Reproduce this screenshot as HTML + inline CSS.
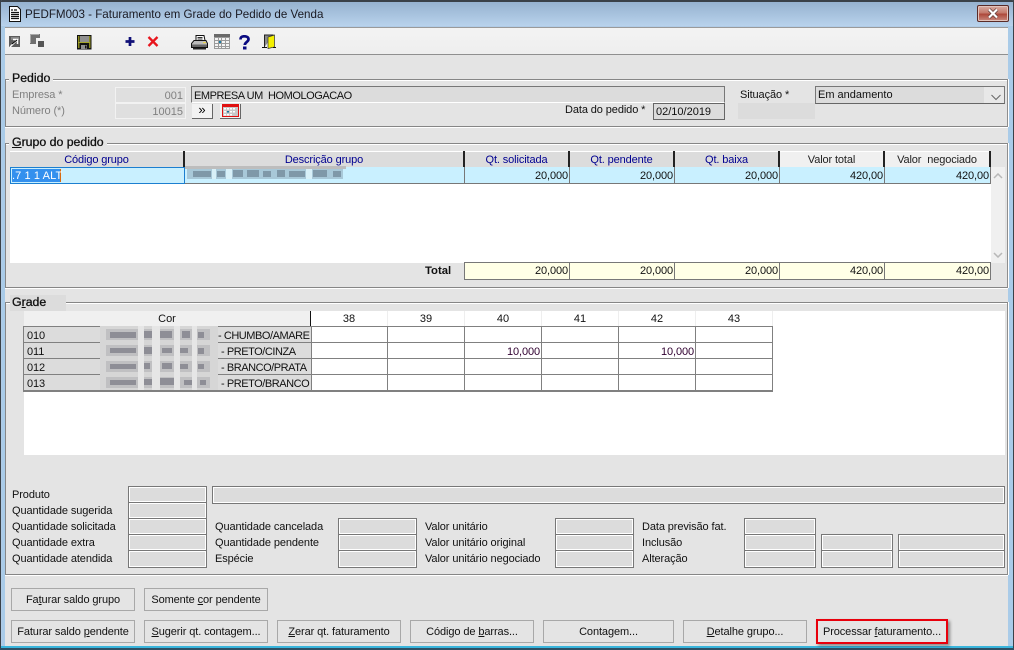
<!DOCTYPE html>
<html><head><meta charset="utf-8">
<style>
html,body{margin:0;padding:0;background:#e4e4e4}
#w{position:relative;width:1014px;height:650px;overflow:hidden;background:#e4e4e4;font:11px/16px "Liberation Sans",sans-serif;color:#111}
#w div,#w svg{position:absolute}
.t{white-space:nowrap;height:16px;margin-top:1px;letter-spacing:-.1px}
.d{color:#808080}
.cp{letter-spacing:-.45px}
.g{border:1px solid #868686;border-right-color:#8e8e8e;box-shadow:0 1px 0 #fff,inset 0 1px 0 #fff,1px 0 0 #fff;box-sizing:border-box}
.gt{-webkit-text-stroke:.3px #111;background:#e4e4e4;padding:0 3px;height:15px;line-height:15px;font-size:12.3px;white-space:nowrap}
.f{box-sizing:border-box;background:#dcdcdc;border:1px solid #777;box-shadow:inset 0 0 0 1px #fff}
.e{box-sizing:border-box;background:#dfdfdf;border:1px solid #f2f2f2;text-align:right;color:#808080;padding-right:2px;line-height:16px}
.b{box-sizing:border-box;height:23px;background:#e4e4e4;border:1px solid #a8a8a8;text-align:center;line-height:22px;white-space:nowrap;letter-spacing:-.1px}
.h{box-sizing:border-box;top:151px;height:16px;background:#dcdcdc;color:#000090;text-align:center;line-height:18px;border-right:2px solid #222;box-shadow:inset 0 1px 0 #fff;white-space:nowrap;letter-spacing:-.12px}
.h2{background:#f0f0f0;color:#222}
.c{box-sizing:border-box;top:167px;height:17px;background:#c9f0ff;text-align:right;padding-right:1px;line-height:18px;border-right:1px solid #777;border-bottom:1px solid #777;letter-spacing:-.1px}
.tt{box-sizing:border-box;top:262px;height:18px;background:#ffffe6;text-align:right;padding-right:1px;line-height:17px;border-top:1px solid #777;border-right:1px solid #777;border-bottom:1px solid #777;letter-spacing:-.1px}
.v{background:#808080;width:1px}
.n{background:#808080;height:1px}
.hc{top:311px;height:15px;text-align:center;line-height:17px;width:77px;border-right:1px solid #eee;box-sizing:border-box}
u{text-decoration:underline}
</style></head><body><div id="w">

<!-- frame -->
<div style="left:0;top:0;width:1014px;height:650px;background:#b0cbe6;border-radius:6px 6px 0 0"></div>
<div style="left:0;top:0;width:1014px;height:2px;background:#3a4148;border-radius:6px 6px 0 0"></div>
<div style="left:0;top:0;width:1px;height:650px;background:#3a4148"></div>
<div style="left:1013px;top:0;width:1px;height:650px;background:#3a4148"></div>
<div style="left:0;top:648px;width:1014px;height:2px;background:#2f4f63"></div>
<div style="left:1px;top:2px;width:1012px;height:24px;background:linear-gradient(#96b2cf,#b8d2ec)"></div>
<div style="left:2px;top:26px;width:3px;height:622px;background:#a9cbe8"></div>
<div style="left:1008px;top:26px;width:5px;height:622px;background:#a9cbe8"></div>
<div style="left:1px;top:646px;width:1012px;height:2px;background:#39b5dc"></div>

<!-- title -->
<svg style="left:8px;top:6px" width="14" height="16" viewBox="0 0 14 16"><path d="M1.5.5h8l3 3v12h-11z" fill="#fff" stroke="#111"/><path d="M3 4h2M6 4h3M3 6.5h8M3 8.5h8M3 10.5h8M3 12.5h8" stroke="#111" stroke-width="1.2"/></svg>
<div class="t" style="left:25px;top:6px;font-size:11.6px;color:#1a1a22;letter-spacing:0">PEDFM003 - Faturamento em Grade do Pedido de Venda</div>
<div style="left:977px;top:5px;width:32px;height:17px;box-sizing:border-box;border:1px solid #5a2b27;border-radius:2px;background:linear-gradient(#d9aca2 0,#c47a6c 45%,#ae4a3c 55%,#c98a7e 100%);box-shadow:inset 0 0 0 1px #e2c3bb"></div>
<svg style="left:986px;top:8px" width="14" height="11" viewBox="0 0 14 11"><path d="M3 1.5l8 8M11 1.5l-8 8" stroke="#5e3c38" stroke-width="3.6"/><path d="M3 1.5l8 8M11 1.5l-8 8" stroke="#fff" stroke-width="2.2"/></svg>

<!-- toolbar -->
<div style="left:5px;top:27px;width:1003px;height:26px;background:linear-gradient(#f3f3f3,#eeeeee);border-top:1px solid #9a9a9a;border-bottom:1px solid #8f8f8f"></div>
<div style="left:5px;top:55px;width:1003px;height:591px;background:#e4e4e4"></div>

<svg style="left:9px;top:36px" width="12" height="12" viewBox="0 0 12 12"><rect width="11" height="11" fill="#5c5c5c"/><rect x="2" y="1" width="8" height="3" fill="#888"/><path d="M1 11L8 4M4 3.5h4.5V8" stroke="#fff" stroke-width="1.5" fill="none"/><path d="M3 8L8 4" stroke="#000"/></svg>
<svg style="left:30px;top:34px" width="15" height="14" viewBox="0 0 15 14"><path d="M0 0h10v4H6v6H0z" fill="#6f6f6f"/><path d="M1 0h8v1H1zM0 0h1v9H0z" fill="#a8a8a8"/><rect x="8" y="7" width="6" height="6" fill="#555"/></svg>
<svg style="left:77px;top:35px" width="15" height="15" viewBox="0 0 15 15"><rect width="14.5" height="14.5" fill="#111"/><rect x="1" y="1" width="1.5" height="12" fill="#8a8a1e"/><rect x="12" y="1" width="1.5" height="12" fill="#8a8a1e"/><rect x="3" y="1" width="9" height="6" fill="#8f8f8f"/><rect x="1" y="7" width="12" height="1" fill="#a5a52a"/><rect x="4" y="10" width="6" height="4" fill="#8f8f8f"/><rect x="8" y="10.500" width="1.500" height="3" fill="#111"/></svg>
<svg style="left:125px;top:37px" width="10" height="10" viewBox="0 0 10 10"><path d="M5 0v9M0.500 4.500h9" stroke="#101078" stroke-width="2.700"/></svg>
<svg style="left:147px;top:36px" width="12" height="11" viewBox="0 0 12 11"><path d="M1.500 1l9 9M10.500 1l-9 9" stroke="#e8141c" stroke-width="2.300"/></svg>
<svg style="left:191px;top:35px" width="17" height="15" viewBox="0 0 17 15"><path d="M5 .5h8l1 5H5z" fill="#fff" stroke="#111"/><path d="M6.500 2.500h5M6.500 4h5" stroke="#333"/><path d="M3 5.500h12l1.500 3v4h-16v-4z" fill="#bdbdbd" stroke="#111"/><rect x="1" y="9.500" width="15" height="2.500" fill="#666"/><rect x="12" y="7" width="3" height="1.200" fill="#e6d14a"/><path d="M2 13h13v1.500H2z" fill="#222"/></svg>
<svg style="left:214px;top:34px" width="16" height="15" viewBox="0 0 16 15"><rect width="16" height="15" fill="#9a9a9a"/><rect y="0" width="16" height="3" fill="#6a6a6a"/><g fill="#f4f4f4"><rect x="1" y="4" width="3" height="2"/><rect x="5" y="4" width="2" height="2"/><rect x="8" y="4" width="3" height="2"/><rect x="12" y="4" width="3" height="2"/><rect x="1" y="7" width="3" height="2"/><rect x="8" y="7" width="3" height="2"/><rect x="12" y="7" width="3" height="2"/><rect x="1" y="10" width="3" height="2"/><rect x="5" y="10" width="2" height="2"/><rect x="8" y="10" width="3" height="2"/><rect x="12" y="10" width="3" height="2"/><rect x="1" y="13" width="3" height="1"/><rect x="5" y="13" width="2" height="1"/><rect x="8" y="13" width="3" height="1"/><rect x="12" y="13" width="3" height="1"/></g><rect x="5" y="7" width="2" height="2" fill="#1a7fa8"/></svg>
<svg style="left:239px;top:35px" width="11" height="15" viewBox="0 0 11 15"><path d="M1.500 4.500C1.500 2 3 1.300 5.300 1.300 8 1.300 9.500 2.500 9.500 4.300c0 2.700-3.700 2.900-3.700 5.700" fill="none" stroke="#0a0a80" stroke-width="2.700"/><rect x="4" y="11.500" width="3.500" height="3" fill="#0a0a80"/></svg>
<svg style="left:261px;top:34px" width="16" height="15" viewBox="0 0 16 15"><path d="M3.500 13V1h9" fill="#8a8a8a" stroke="#222"/><path d="M7 3l6.500-2v12l-6.500 1.500z" fill="#f4f000" stroke="#333" stroke-width=".7"/><path d="M1 13.500h5M12 13.500h3" stroke="#111"/></svg>

<!-- Pedido group -->
<div class="g" style="left:5px;top:79px;width:1003px;height:48px"></div>
<div class="gt" style="left:9px;top:71px">Pedido</div>
<div class="t d" style="left:12px;top:86px">Empresa *</div>
<div class="t d" style="left:12px;top:102px">Número (*)</div>
<div class="e" style="left:115px;top:87px;width:71px;height:16px">001</div>
<div class="e" style="left:115px;top:103px;width:71px;height:16px">10015</div>
<div class="cp" style="left:191px;top:86px;width:534px;height:17px;box-sizing:border-box;background:#dcdcdc;border:1px solid #777;border-bottom-color:#fff;line-height:18px;padding-left:2px;white-space:pre">EMPRESA UM  HOMOLOGACAO</div>
<div style="left:192px;top:104px;width:21px;height:15px;box-sizing:border-box;background:#f2f2f2;border-right:1px solid #666;border-bottom:1px solid #666;text-align:center;line-height:11px;font-size:13px;color:#000">»</div>
<div style="left:220px;top:104px;width:21px;height:15px;box-sizing:border-box;background:#f2f2f2;border-right:1px solid #666;border-bottom:1px solid #666"></div>
<svg style="left:222px;top:104px" width="17" height="13" viewBox="0 0 17 13"><rect x=".5" y=".5" width="16" height="12" fill="#c8c8c8" stroke="#e01010"/><rect x="1" y="1" width="15" height="2" fill="#e01010"/><g fill="#fff"><rect x="2" y="4" width="2" height="1.500"/><rect x="5" y="4" width="2" height="1.500"/><rect x="8" y="4" width="2" height="1.500"/><rect x="11" y="4" width="2" height="1.500"/><rect x="2" y="7" width="2" height="1.500"/><rect x="8" y="7" width="2" height="1.500"/><rect x="11" y="7" width="2" height="1.500"/><rect x="2" y="10" width="2" height="1.500"/><rect x="5" y="10" width="2" height="1.500"/><rect x="8" y="10" width="2" height="1.500"/></g><rect x="5" y="7" width="2" height="1.500" fill="#11729c"/></svg>
<div class="t" style="left:565px;top:101px">Data do pedido *</div>
<div style="left:653px;top:103px;width:72px;height:17px;box-sizing:border-box;background:#dcdcdc;border:1px solid #666;line-height:16px;padding-left:2px">02/10/2019</div>
<div class="t" style="left:740px;top:86px">Situação *</div>
<div style="left:815px;top:86px;width:190px;height:18px;box-sizing:border-box;background:linear-gradient(90deg,#dcdcdc 168px,#e8e8e8 168px);border:1px solid #777;border-bottom-color:#666;line-height:17px;padding-left:2px">Em andamento</div>
<svg style="left:990px;top:94px" width="12" height="7" viewBox="0 0 12 7"><path d="M1.500 1l4.500 4.500L10.500 1" fill="none" stroke="#666"/></svg>
<div style="left:738px;top:103px;width:77px;height:16px;background:#dcdcdc"></div>

<!-- Grupo group -->
<div class="g" style="left:5px;top:143px;width:1003px;height:145px"></div>
<div class="gt" style="left:9px;top:135px"><u>G</u>rupo do pedido</div>
<div style="left:10px;top:167px;width:981px;height:96px;background:#fff"></div>
<div style="left:991px;top:167px;width:14px;height:96px;background:#f0f0f0"></div>
<svg style="left:993px;top:173px" width="10" height="6" viewBox="0 0 10 6"><path d="M1 5l4-4 4 4" stroke="#b8b8b8" stroke-width="1.500" fill="none"/></svg>
<svg style="left:993px;top:252px" width="10" height="6" viewBox="0 0 10 6"><path d="M1 1l4 4 4-4" stroke="#b8b8b8" stroke-width="1.500" fill="none"/></svg>

<div class="h" style="left:10px;width:175px">Código grupo</div>
<div class="h" style="left:185px;width:280px">Descrição grupo</div>
<div class="h" style="left:465px;width:105px">Qt. solicitada</div>
<div class="h" style="left:570px;width:105px">Qt. pendente</div>
<div class="h" style="left:675px;width:105px">Qt. baixa</div>
<div class="h h2" style="left:780px;width:105px">Valor total</div>
<div class="h h2" style="left:885px;width:106px;white-space:pre">Valor  negociado</div>

<div class="c" style="left:10px;width:175px;border:1px solid #1c7fd0;text-align:left;padding:0 0 0 1px;line-height:15px"></div>
<div style="left:12px;top:169px;width:48px;height:13px;background:#3390ee"></div>
<div style="left:60px;top:169px;width:1px;height:13px;background:#d86a10"></div>
<div class="t" style="left:12px;top:167px;color:#fff;letter-spacing:.1px">.7 1 1 ALT</div>
<div class="c" style="left:185px;width:280px"></div>
<div class="c" style="left:465px;width:105px">20,000</div>
<div class="c" style="left:570px;width:105px">20,000</div>
<div class="c" style="left:675px;width:105px">20,000</div>
<div class="c" style="left:780px;width:105px">420,00</div>
<div class="c" style="left:885px;width:106px">420,00</div>

<svg style="left:185px;top:166px" width="162" height="14" viewBox="0 0 162 14" shape-rendering="crispEdges"><rect x="0" y="0" width="161" height="3" fill="#bdbdbd"/><rect x="2" y="3" width="156" height="10" fill="#a8c8d8"/><g fill="#7f98a8"><rect x="8" y="5" width="18" height="6"/><rect x="32" y="5" width="8" height="6"/><rect x="48" y="4" width="10" height="7"/><rect x="62" y="4" width="12" height="7"/><rect x="78" y="5" width="8" height="6"/><rect x="92" y="4" width="8" height="7"/><rect x="104" y="5" width="16" height="6"/><rect x="128" y="4" width="14" height="7"/><rect x="148" y="5" width="8" height="6"/></g><g fill="#d8f0f8"><rect x="27" y="3" width="4" height="10"/><rect x="41" y="3" width="6" height="10"/><rect x="121" y="3" width="6" height="10"/></g></svg>

<div class="t" style="left:425px;top:262px;font-weight:bold;font-size:11.3px;letter-spacing:0">Total</div>
<div class="tt" style="left:464px;width:106px;border-left:1px solid #777">20,000</div>
<div class="tt" style="left:570px;width:105px">20,000</div>
<div class="tt" style="left:675px;width:105px">20,000</div>
<div class="tt" style="left:780px;width:105px">420,00</div>
<div class="tt" style="left:885px;width:106px">420,00</div>

<!-- Grade group -->
<div class="g" style="left:5px;top:302px;width:1003px;height:273px"></div>
<div style="left:10px;top:295px;width:56px;height:16px;background:#dcdcdc"></div>
<div class="gt" style="left:9px;top:295px;background:transparent"><span>G<u>r</u>ade</span></div>
<div style="left:24px;top:311px;width:981px;height:144px;background:#fff"></div>
<div style="left:24px;top:311px;width:287px;height:15px;background:#f0f0f0;text-align:center;line-height:17px;box-sizing:border-box;border-right:1px solid #111">Cor</div>
<div class="hc" style="left:311px">38</div>
<div class="hc" style="left:388px">39</div>
<div class="hc" style="left:465px">40</div>
<div class="hc" style="left:542px">41</div>
<div class="hc" style="left:619px">42</div>
<div class="hc" style="left:696px">43</div>

<div style="left:24px;top:327px;width:287px;height:64px;background:#dcdcdc"></div>
<div class="n" style="left:23px;top:326px;width:750px"></div>
<div class="n" style="left:23px;top:342px;width:750px"></div>
<div class="n" style="left:23px;top:358px;width:750px"></div>
<div class="n" style="left:23px;top:374px;width:750px"></div>
<div class="n" style="left:23px;top:390px;width:750px;height:2px"></div>
<div class="v" style="left:23px;top:326px;height:66px"></div>
<div class="v" style="left:311px;top:326px;height:66px"></div>
<div class="v" style="left:387px;top:326px;height:66px"></div>
<div class="v" style="left:464px;top:326px;height:66px"></div>
<div class="v" style="left:541px;top:326px;height:66px"></div>
<div class="v" style="left:618px;top:326px;height:66px"></div>
<div class="v" style="left:695px;top:326px;height:66px"></div>
<div class="v" style="left:772px;top:326px;height:66px"></div>

<svg style="left:100px;top:326px" width="118" height="64" viewBox="0 0 118 64" shape-rendering="crispEdges"><rect width="118" height="64" fill="#d6d6d6"/><g fill="#c0c0c2"><rect x="6" y="3" width="104" height="11"/><rect x="6" y="19" width="104" height="11"/><rect x="6" y="35" width="104" height="11"/><rect x="6" y="51" width="104" height="11"/></g><g fill="#e6e6e6"><rect x="38" y="0" width="6" height="64"/><rect x="52" y="0" width="8" height="64"/><rect x="74" y="0" width="6" height="64"/><rect x="92" y="0" width="5" height="64"/></g><g fill="#8e8e96"><rect x="10" y="6" width="26" height="6"/><rect x="44" y="5" width="8" height="7"/><rect x="60" y="5" width="12" height="7"/><rect x="82" y="5" width="8" height="7"/><rect x="98" y="6" width="6" height="6"/><rect x="10" y="22" width="26" height="5"/><rect x="44" y="21" width="8" height="7"/><rect x="62" y="22" width="10" height="5"/><rect x="80" y="22" width="8" height="5"/><rect x="98" y="22" width="6" height="6"/><rect x="10" y="38" width="26" height="5"/><rect x="44" y="37" width="6" height="6"/><rect x="62" y="37" width="10" height="6"/><rect x="80" y="38" width="8" height="5"/><rect x="98" y="38" width="6" height="5"/><rect x="10" y="54" width="26" height="5"/><rect x="44" y="53" width="8" height="6"/><rect x="60" y="52" width="14" height="7"/><rect x="84" y="54" width="8" height="5"/><rect x="100" y="54" width="6" height="5"/></g></svg>

<div class="t" style="left:27px;top:327px">010</div>
<div class="t" style="left:27px;top:343px">011</div>
<div class="t" style="left:27px;top:359px">012</div>
<div class="t" style="left:27px;top:375px">013</div>
<div class="t cp" style="left:218px;top:327px">- CHUMBO/AMARE</div>
<div class="t cp" style="left:221px;top:343px">- PRETO/CINZA</div>
<div class="t cp" style="left:221px;top:359px">- BRANCO/PRATA</div>
<div class="t cp" style="left:221px;top:375px">- PRETO/BRANCO</div>
<div class="t" style="left:507px;top:343px;color:#300030">10,000</div>
<div class="t" style="left:661px;top:343px;color:#300030">10,000</div>

<!-- details -->
<div class="t" style="left:12px;top:486px">Produto</div>
<div class="t" style="left:12px;top:502px">Quantidade sugerida</div>
<div class="t" style="left:12px;top:518px">Quantidade solicitada</div>
<div class="t" style="left:12px;top:534px">Quantidade extra</div>
<div class="t" style="left:12px;top:550px">Quantidade atendida</div>
<div class="f" style="left:128px;top:486px;width:79px;height:17px"></div>
<div class="f" style="left:128px;top:502px;width:79px;height:17px"></div>
<div class="f" style="left:128px;top:518px;width:79px;height:17px"></div>
<div class="f" style="left:128px;top:534px;width:79px;height:17px"></div>
<div class="f" style="left:128px;top:550px;width:79px;height:18px"></div>
<div class="f" style="left:212px;top:486px;width:793px;height:18px"></div>
<div class="t" style="left:215px;top:518px">Quantidade cancelada</div>
<div class="t" style="left:215px;top:534px">Quantidade pendente</div>
<div class="t" style="left:215px;top:550px">Espécie</div>
<div class="f" style="left:338px;top:518px;width:79px;height:17px"></div>
<div class="f" style="left:338px;top:534px;width:79px;height:17px"></div>
<div class="f" style="left:338px;top:550px;width:79px;height:18px"></div>
<div class="t" style="left:425px;top:518px">Valor unitário</div>
<div class="t" style="left:425px;top:534px">Valor unitário original</div>
<div class="t" style="left:425px;top:550px">Valor unitário negociado</div>
<div class="f" style="left:555px;top:518px;width:79px;height:17px"></div>
<div class="f" style="left:555px;top:534px;width:79px;height:17px"></div>
<div class="f" style="left:555px;top:550px;width:79px;height:18px"></div>
<div class="t" style="left:642px;top:518px">Data previsão fat.</div>
<div class="t" style="left:642px;top:534px">Inclusão</div>
<div class="t" style="left:642px;top:550px">Alteração</div>
<div class="f" style="left:744px;top:518px;width:72px;height:17px"></div>
<div class="f" style="left:744px;top:534px;width:72px;height:17px"></div>
<div class="f" style="left:744px;top:550px;width:72px;height:18px"></div>
<div class="f" style="left:821px;top:534px;width:72px;height:17px"></div>
<div class="f" style="left:821px;top:550px;width:72px;height:18px"></div>
<div class="f" style="left:898px;top:534px;width:107px;height:17px"></div>
<div class="f" style="left:898px;top:550px;width:107px;height:18px"></div>

<!-- buttons -->
<div class="b" style="left:11px;top:588px;width:124px">Fa<u>t</u>urar saldo grupo</div>
<div class="b" style="left:144px;top:588px;width:124px">Somente <u>c</u>or pendente</div>
<div class="b" style="left:11px;top:620px;width:124px">Faturar saldo <u>p</u>endente</div>
<div class="b" style="left:144px;top:620px;width:124px"><u>S</u>ugerir qt. contagem...</div>
<div class="b" style="left:277px;top:620px;width:124px"><u>Z</u>erar qt. faturamento</div>
<div class="b" style="left:410px;top:620px;width:124px">Código de <u>b</u>arras...</div>
<div class="b" style="left:543px;top:620px;width:131px">Conta<u>g</u>em...</div>
<div class="b" style="left:683px;top:620px;width:124px"><u>D</u>etalhe grupo...</div>
<div class="b" style="left:816px;top:619px;width:132px;height:25px;border:2px solid #e8000c;line-height:23px;box-shadow:2px 2px 3px rgba(0,0,0,.4)">Processar <u>f</u>aturamento...</div>
</div></body></html>
